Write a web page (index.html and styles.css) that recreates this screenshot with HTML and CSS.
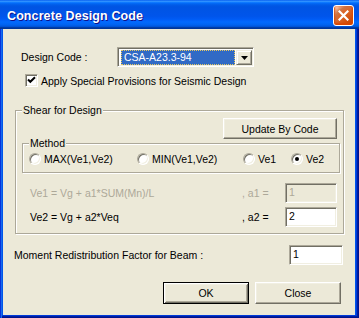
FILE: index.html
```html
<!DOCTYPE html>
<html lang="en">
<head>
  <meta charset="UTF-8" />
  <title>Concrete Design Code</title>
  <link rel="stylesheet" href="styles.css">
</head>
<body>
  <div class="window">

    <!-- Title bar -->
    <div class="titlebar">
      <span class="title">Concrete Design Code</span>
      <div class="close-btn">
        <svg width="11" height="11" viewBox="0 0 11 11">
          <path d="M1.5 1.5 L9.5 9.5 M9.5 1.5 L1.5 9.5" stroke="#fff" stroke-width="2.2" stroke-linecap="square" />
        </svg>
      </div>
    </div>

    <div class="frame">
      <div class="client">

        <!-- Design code -->
        <div class="code-row">
          <span class="code-label">Design Code :</span>
          <div class="combo">
            <div class="combo-value"><span class="combo-sel">CSA-A23.3-94</span></div>
            <div class="combo-btn">
              <svg width="7" height="4" viewBox="0 0 7 4"><polygon points="0,0 7,0 3.5,4" fill="#000" /></svg>
            </div>
          </div>
        </div>

        <div class="check-row">
          <span class="check">
            <svg width="9" height="9" viewBox="0 0 9 9">
              <path d="M1 3.5 L3.3 5.8 L8 1.2" stroke="#000" stroke-width="2" fill="none" />
            </svg>
          </span>
          <span>Apply Special Provisions for Seismic Design</span>
        </div>

        <!-- Shear group -->
        <fieldset class="group shear">
          <legend>Shear for Design</legend>
          <div class="update-row">
            <div class="btn update-btn">Update By Code</div>
          </div>

          <fieldset class="group method">
            <legend>Method</legend>
            <div class="radios">
              <span class="radio-item w-max"><span class="radio"></span>MAX(Ve1,Ve2)</span>
              <span class="radio-item w-min"><span class="radio"></span>MIN(Ve1,Ve2)</span>
              <span class="radio-item w-ve1"><span class="radio"></span>Ve1</span>
              <span class="radio-item"><span class="radio on"></span>Ve2</span>
            </div>
          </fieldset>

          <div class="formula disabled">
            <span class="expr">Ve1 = Vg + a1*SUM(Mn)/L</span>
            <span class="coef">, a1 =</span>
            <span class="field">1</span>
          </div>
          <div class="formula second">
            <span class="expr">Ve2 = Vg + a2*Veq</span>
            <span class="coef">, a2 =</span>
            <span class="field">2</span>
          </div>
        </fieldset>

        <div class="moment-row">
          <span class="moment-label">Moment Redistribution Factor for Beam :</span>
          <span class="field moment-field">1</span>
        </div>

        <div class="btn-row">
          <div class="btn default">OK</div>
          <div class="btn">Close</div>
        </div>

      </div>
    </div>
  </div>
</body>
</html>
```

FILE: styles.css
```css
* {
  margin: 0; padding: 0;
  box-sizing: border-box;
}
body {
  width: 359px;
  height: 318px;
  overflow: hidden;
  font-family: "Liberation Sans", Arial, sans-serif;
  font-size: 10.5px;
  color: #000;
  background: #fff;
}
.window {
  width: 359px;
  height: 318px;
  display: flex;
  flex-direction: column;
}

/* title bar */
.titlebar {
  height: 29px;
  flex: none;
  display: flex;
  align-items: center;
  justify-content: space-between;
  padding: 2px 5px 0 7px;
  background: linear-gradient(180deg, #0058ee 0%, #3593ff 4%, #288eff 6%, #127dff 8%, #036ffc 10%, #0262ee 14%, #0057e5 20%, #0054e3 24%, #0055eb 56%, #005bf5 66%, #026afe 76%, #0062ef 86%, #0052d6 92%, #0040ab 94%, #003092 100%);
}
.title {
  color: #fff;
  font-weight: bold;
  font-size: 12.5px;
  letter-spacing: 0.1px;
  text-shadow: 1px 1px #0f1089;
}
.close-btn {
  width: 21px;
  height: 21px;
  border: 1px solid #fff;
  border-radius: 3px;
  background: radial-gradient(circle at 90% 90%, #cc4600 0%, #dc6527 55%, #cd7546 70%, #ffccb2 90%, #fff 100%);
  box-shadow: inset 0 -1px 2px 1px #da4600;
  display: flex;
  align-items: center;
  justify-content: center;
}

/* window frame */
.frame {
  flex: 1;
  display: flex;
  padding: 0 4px 3px 3px;
  background: #0055ea;
  box-shadow: inset 1px 0 #0831d9, inset 2px 0 #166aee, inset -1px -1px #00138c, inset -2px -2px #001ea0, inset -3px -3px #003bda;
}
.client {
  flex: 1;
  background: #ece9d8;
  padding-top: 18px;
  display: flex;
  flex-direction: column;
}

/* design code row */
.code-row {
  display: flex;
  align-items: center;
  height: 20px;
  padding-left: 18px;
}
.code-label {
  width: 96px;
}
.combo {
  width: 137px;
  height: 20px;
  display: flex;
  background: #fff;
  border: 1px solid;
  border-color: #aca899 #fff #fff #aca899;
  box-shadow: inset 1px 1px #716f64, inset -1px -1px #f1efe2;
  padding: 2px 1px 1px 2px;
}
.combo-value {
  flex: 1;
  padding: 0 1px 0 1px;
}
.combo-sel {
  display: block;
  height: 15px;
  line-height: 13px;
  padding-left: 2px;
  background: #316ac5;
  color: #fff;
  border: 1px dotted #e8c860;
}
.combo-btn {
  width: 16px;
  height: 15px;
  background: #ece9d8;
  border: 1px solid;
  border-color: #f1efe2 #716f64 #716f64 #f1efe2;
  box-shadow: inset 1px 1px #fff, inset -1px -1px #aca899;
  display: flex;
  align-items: center;
  justify-content: center;
}

/* checkbox */
.check-row {
  display: flex;
  align-items: center;
  margin-top: 7px;
  padding-left: 22px;
  height: 13px;
}
.check {
  width: 13px;
  height: 13px;
  margin-right: 3px;
  background: #fff;
  border: 1px solid;
  border-color: #aca899 #fff #fff #aca899;
  box-shadow: inset 1px 1px #716f64, inset -1px -1px #f1efe2;
  display: flex;
  align-items: center;
  justify-content: center;
}

/* group boxes */
.group {
  border: 1px solid #aca899;
  box-shadow: inset 1px 1px #fff, 1px 1px #fff;
}
.group legend {
  line-height: 14px;
  padding: 0 1px;
  background: #ece9d8;
}
.shear {
  margin: 16px 11px 0 12px;
  padding: 0 3px 6px 6px;
}
.update-row {
  display: flex;
  justify-content: flex-end;
  margin-top: 1px;
}
.btn {
  height: 21px;
  display: flex;
  align-items: center;
  justify-content: center;
  background: #ece9d8;
  border: 1px solid;
  border-color: #fff #716f64 #716f64 #fff;
  box-shadow: inset -1px -1px #aca899, inset 1px 1px #f1efe2;
}
.update-btn {
  width: 114px;
  margin-right: 3px;
}
.method {
  margin-top: -3px;
  padding: 0 0 7px 6px;
}
.radios {
  display: flex;
  align-items: center;
  height: 13px;
  margin-top: 2px;
}
.radio-item {
  display: flex;
  align-items: center;
}
.w-max { width: 108px; }
.w-min { width: 106px; }
.w-ve1 { width: 48px; }
.radio {
  width: 12px;
  height: 12px;
  margin-right: 3px;
  border-radius: 50%;
  background: #fff;
  border: 1px solid;
  border-color: #aca899 #fff #fff #aca899;
  box-shadow: inset 1px 1px #716f64, inset -1px -1px #f1efe2;
  display: flex;
  align-items: center;
  justify-content: center;
}
.radio.on::after {
  content: "";
  width: 4px;
  height: 4px;
  border-radius: 50%;
  background: #000;
}

/* formula rows */
.formula {
  display: flex;
  align-items: center;
  height: 20px;
  margin-top: 10px;
  padding: 0 3px 0 8px;
}
.formula.second {
  margin-top: 4px;
}
.expr {
  flex: 1;
}
.coef {
  width: 43px;
}
.field {
  width: 52px;
  height: 20px;
  line-height: 16px;
  padding-left: 3px;
  background: #fff;
  border: 1px solid;
  border-color: #aca899 #fff #fff #aca899;
  box-shadow: inset 1px 1px #716f64, inset -1px -1px #f1efe2;
}
.disabled {
  color: #aca899;
}
.disabled .field {
  background: #ece9d8;
}

/* moment row */
.moment-row {
  display: flex;
  align-items: center;
  margin-top: 11px;
  padding: 0 12px 0 11px;
}
.moment-label {
  flex: 1;
}
.moment-field {
  width: 54px;
}

/* bottom buttons */
.btn-row {
  display: flex;
  justify-content: flex-end;
  gap: 6px;
  margin-top: 17px;
  padding-right: 14px;
}
.btn-row .btn {
  width: 86px;
  height: 22px;
}
.btn.default {
  border-color: #000;
  box-shadow: inset 1px 1px #fff, inset -1px -1px #716f64, inset 2px 2px #f1efe2, inset -2px -2px #aca899;
}
```
